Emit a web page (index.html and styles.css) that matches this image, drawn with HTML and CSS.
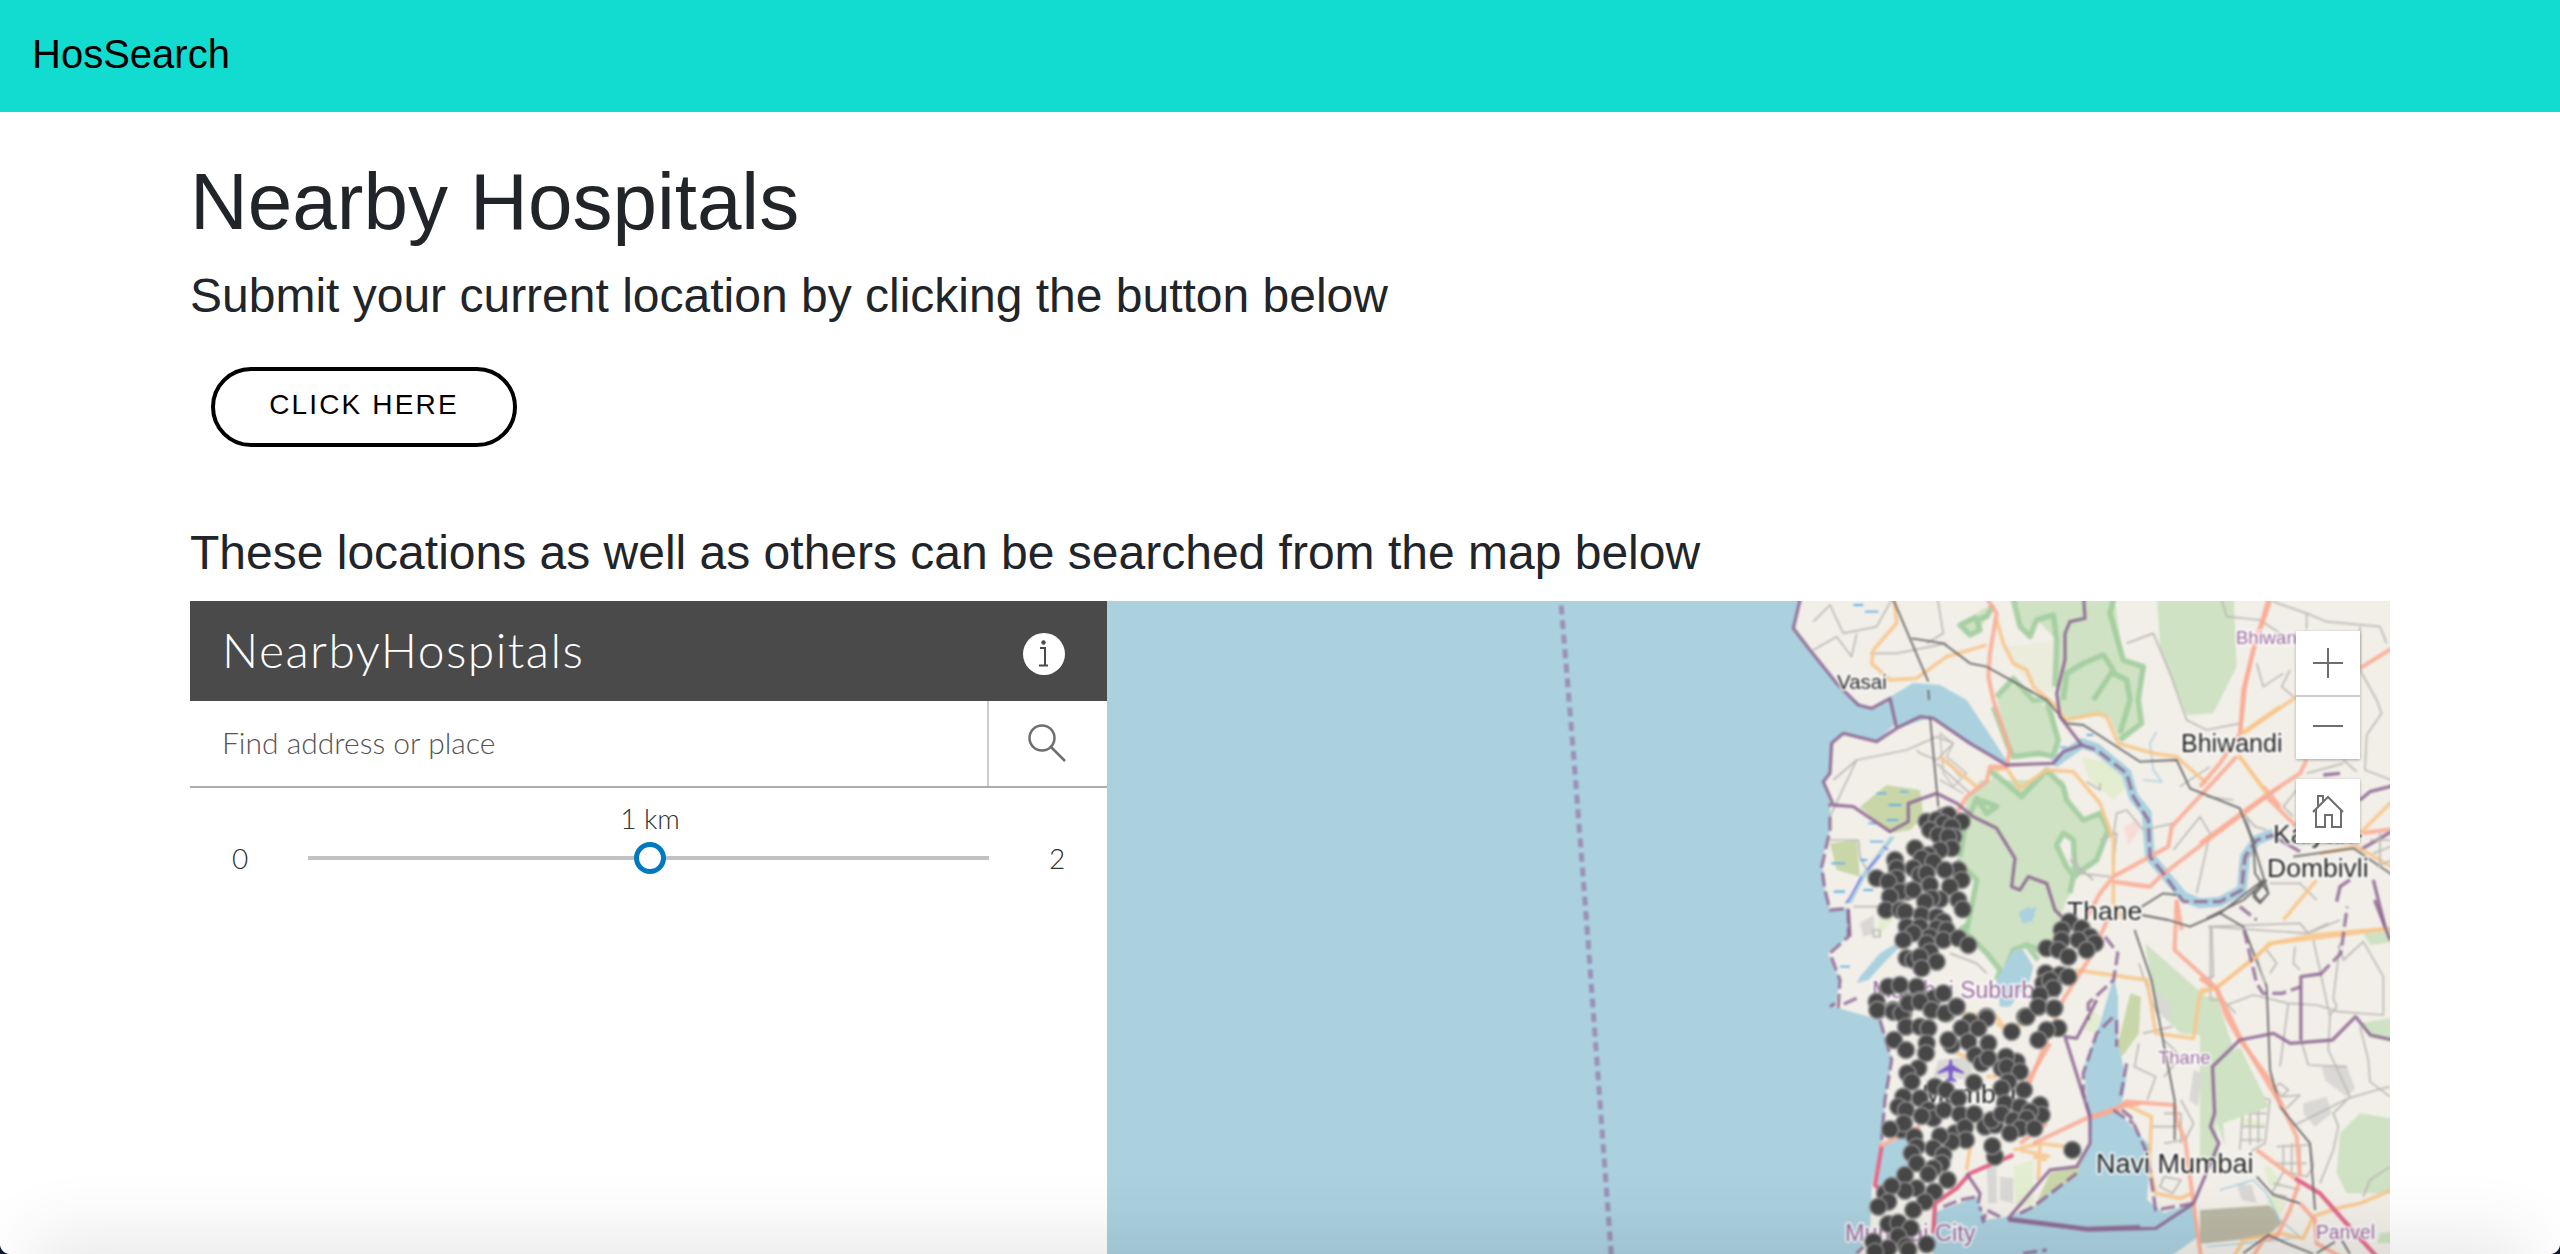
FILE: index.html
```html
<!DOCTYPE html>
<html lang="en">
<head>
<meta charset="utf-8">
<title>HosSearch</title>
<link rel="stylesheet" href="styles.css">
</head>
<body>
<nav class="navbar"><span class="brand">HosSearch</span></nav>
<main class="content">
  <h1 class="title">Nearby Hospitals</h1>
  <h4 class="lead-one">Submit your current location by clicking the button below</h4>
  <button class="cta" type="button">CLICK HERE</button>
  <h4 class="lead-two">These locations as well as others can be searched from the map below</h4>
  <section class="app">
    <aside class="panel">
      <header class="panel-head">
        <span class="panel-title">NearbyHospitals</span>
        <svg class="info" viewBox="0 0 42 42" width="42" height="42"><circle cx="21" cy="21" r="21" fill="#fff"/><circle cx="20.5" cy="9.5" r="2.2" fill="#4a4a4a"/><path d="M17 15h5v17M16 32.500h9" fill="none" stroke="#4a4a4a" stroke-width="2"/></svg>
      </header>
      <div class="search">
        <div class="search-input">Find address or place</div>
        <div class="search-btn"><svg viewBox="0 0 40 40" width="40" height="40"><circle cx="16" cy="15" r="12.500" fill="none" stroke="#6e6e6e" stroke-width="2.500"/><path d="M25 24l14 14" stroke="#6e6e6e" stroke-width="2.500" fill="none"/></svg></div>
      </div>
      <div class="slider">
        <span class="slider-end slider-min">0</span>
        <div class="track"><span class="thumb-label">1 km</span><span class="thumb"></span></div>
        <span class="slider-end slider-max">2</span>
      </div>
    </aside>
    <div class="map">
      <svg class="basemap" viewBox="1097 591 1303 673" width="1303" height="673">
        <rect class="sea" x="1097" y="591" width="1303" height="673"/>
        <path class="dash-sea" d="M1560 591L1574 760L1587 927L1612 1264"/>
        <path class="land" d="M1802 591L1800 601L1793 628L1810 650L1835 682L1852 700L1870 708L1890 698L1913 683L1937 685L1967 703L1987 733L2007 763L1970 745L1933 718L1897 722L1877 742L1843 733L1832 743L1830 773L1823 782L1830 803L1830 830L1822 860L1825 890L1830 910L1848 908L1848 937L1828 953L1840 980L1835 1007L1880 1020L1892 1060L1885 1100L1882 1140L1872 1185L1870 1233L1850 1264L2400 1264L2400 591Z"/>
        <path class="wat" d="M1933 1264L1933 1213L1977 1197L1985 1220L2007 1217L2033 1207L2077 1170L2090 1143L2088 1117L2084 1067L2101 1020L2109 993L2114 977L2118 997L2118 1040L2126 1080L2122 1103L2118 1112L2151 1147L2147 1200L2164 1213L2193 1203L2198 1237L2160 1264Z"/>
        <path class="wat" d="M1882 1146L1895 1141L1920 1125L1908 1170L1885 1187L1874 1186Z"/>
        <g transform="translate(1780 780) scale(.33333)">
          <path class="forest" d="M550 130L600 310L590 420L545 445L620 520L660 570L650 600L680 560L700 510L740 495L800 520L830 470L860 330L890 150L850 0L600 0L560 60Z"/>
          <path class="park" d="M550 130L600 310L590 420L545 445L620 520L660 570L650 600M680 560L700 510L740 495L775 540M740 495L800 520"/>
        </g>
        <g transform="translate(2200 900) scale(.33333)">
          <path class="forest" d="M0 290L50 290L130 540L120 600L45 640L60 800L0 780Z"/>
          <path class="forest" d="M420 700L480 640L600 660L600 880L440 880L410 820Z"/>
          <path class="forest" d="M480 370L600 350L600 425L510 415Z"/>
          <path class="forest" d="M490 100L600 90L600 125L510 135Z"/>
          <path class="pale" d="M190 800L210 798L245 850L210 860Z"/>
          <path class="pale" d="M125 650L195 670L190 685L125 680Z"/>
          <path class="grey" d="M310 610L380 590L395 640L345 680L310 640Z"/>
          <path class="grey" d="M365 500L440 497L465 565L440 590L375 540Z"/>
          <path class="tan" d="M0 930L220 915L245 970L200 1010L20 1030L0 1030Z"/>
          <path class="grey" d="M110 850L155 855L170 910L125 900Z"/>
          <path class="pale" d="M215 885L260 910L240 945L200 910Z"/>
          <path class="forest" d="M540 1000L600 990L600 1030L530 1030Z"/>
          <path class="wline" d="M60 870L160 840L200 880L240 960L300 1010L240 1020L20 1040"/>
          <path class="minor" d="M25 80L300 70L325 100L420 60M340 120L390 350L385 450L450 590L400 640L415 680L400 750L360 850M80 315L160 285L265 310L350 315L415 335L550 345L550 230L490 125L430 180L415 135M300 410L325 495L440 500M390 345L410 320L400 295L420 130M285 675L445 595L530 570L570 560M240 500L265 310M0 240L40 230L35 80L25 80M480 380L505 480L510 545L570 590M490 890L510 840L570 800M200 150L230 190L210 220M285 140L280 190L300 210M240 550L265 570L245 590L225 560ZM250 590L300 585L260 625M120 750L130 600L170 585L210 600L195 730L150 755M130 640H200M125 680H195M150 590V735M175 590V730M120 720H190M230 740L330 735L340 800L320 830L250 815L215 880L260 890M250 735V810M275 730V820M300 735V820M225 790H320M220 850L300 870"/>
          <path class="prim" d="M0 270L50 265L215 130L340 105L600 83M600 860L480 910L410 925L340 950L310 1015L240 1000L130 1020L90 1092"/>
          <path class="trunk" d="M0 235L50 270L80 350L120 420L210 540L290 710L300 830M170 750L285 835M300 840L270 930L230 1010L190 1020L145 1092M300 910L345 960L350 1030L460 1092"/>
          <path class="motor" d="M285 835L360 880L430 960L550 1092"/>
          <path class="rail" d="M60 40L130 80L200 260L210 510L240 620L330 730L345 930M170 830L220 885L300 910M130 1060L205 1005L260 1030L340 1062M350 1060L405 1025M425 1020L450 1062"/>
        </g>
        <g transform="translate(1760 900) scale(.42092 .33333)">
          <path class="forest" d="M915 130L1060 290L1045 405L1000 400L940 330Z"/>
          <path class="forest" d="M1085 480L1140 440L1210 620L1100 670L1105 740L1080 650Z"/>
          <path class="pale" d="M790 330L810 350L795 400L770 390Z"/>
          <path class="olive" d="M880 280L905 290L900 400L860 470L850 430Z"/>
          <path class="grey" d="M945 270L975 320L970 360L940 330Z"/>
          <path class="grey" d="M1030 510L1050 520L1040 620L1020 600Z"/>
          <path class="minor" d="M1065 80L1300 100L1350 70M1070 80V300L1100 300L1130 340M1180 170L1200 250M910 400L980 380M900 430L890 500L940 530L920 600M960 420L1000 470L960 530M1000 600L1030 670L1010 720L960 730M960 640H1000V730M930 680H1000M960 830L1000 840L980 880L950 860ZM900 190L930 300L950 360"/>
          <path class="prim" d="M750 210L920 240L940 400L1030 415L1045 280L1085 262L1180 170L1210 130L1350 110L1497 85M860 610L930 650L925 800L940 880L1000 895L1025 880"/>
          <path class="trunk" d="M990 0L985 150L1085 265L1140 410L1240 620M825 60L790 160L720 300L640 550M780 655L850 630L870 605L985 615L990 660L1010 720L1030 910L1050 1092"/>
          <path class="rail" d="M890 90L930 240L985 600L985 720"/>
          <path class="bd" d="M1030 910L1090 730L1070 680L1080 640L1075 500L1140 420L1220 400L1260 430L1360 420L1415 350L1450 405L1520 425M1285 420L1285 230L1330 222M1030 910L940 985L780 990L590 960M1460 0L1497 120"/>
          <path class="bdd" d="M1030 910L940 930L920 760L880 650L850 620M1150 90L1180 250L1195 280L1240 280L1285 260M1330 225L1380 160L1395 20M1140 20L1180 60M820 110L850 160L840 240L780 310L780 360"/>
        </g>
        <g transform="translate(1780 600) scale(.33333)">
          <path class="forest" d="M700 -30L1000 -30L1030 180L1095 200L1075 300L1085 370L1020 420L985 345L870 360L830 310L830 120L770 60L750 110L720 80Z"/>
          <path class="forest" d="M1130 -30L1360 -30L1370 200L1300 340L1220 345L1140 140Z"/>
          <path class="forest" d="M540 75L590 40L640 10L620 50L600 90L570 105Z"/>
          <path class="forest" d="M650 290L700 235L760 300L820 330L835 420L820 470L780 470L700 470L685 440Z"/>
          <path class="forest" d="M630 510L690 560L720 590L800 510L850 560L860 600L910 660L960 640L985 690L950 780L880 830L870 880L820 990L560 990L590 840L530 780L560 650L600 600L640 560Z"/>
          <path class="soft" d="M770 130L825 120L820 280L760 260L700 200L680 140Z"/>
          <path class="base" d="M850 700L880 720L885 830L860 800L830 735Z"/>
          <path class="pale" d="M905 475L1020 490L1040 560L1000 600L930 540Z"/>
          <path class="blush" d="M1030 680L1070 660L1080 690L1045 735Z"/>
          <path class="olive" d="M240 620L320 555L420 570L430 650L390 690L330 700Z"/>
          <path class="park" d="M640 15L620 50L590 60L600 90L570 105L540 75L590 50M695 -20L720 80L750 110L770 60L820 45L830 120L825 260M1005 -20L990 40L1030 180L1090 200L1075 300L1085 370L1020 420M850 300L860 220L910 190L970 165L1000 210L940 300M1000 220L1040 240L1050 300L1020 400M650 290L700 235L760 300L800 300L835 420L820 470L780 460L700 470L685 440L640 320M630 510L690 560L725 590L800 510L850 560L860 600L910 660L960 640L985 690L950 780L880 830L870 880M850 700L880 720L885 830L860 800L830 735Z"/>
          <path class="park" d="M600 600L650 620L620 640L590 595L545 700L560 650L540 770M530 780L590 840L560 990"/>
          <path class="wat" d="M330 290L400 250L480 255L560 300L620 390L685 490L640 470L560 420L460 350L350 385Z"/>
          <path class="wat" d="M715 940L745 920L765 950L730 970Z"/>
          <path class="river" d="M820 490L905 430L950 445L1040 520L1060 590L1100 640L1110 770L1210 890L1260 910L1320 905L1385 870L1395 770L1430 720L1480 700"/>
          <path class="wline" d="M1130 395L1110 430L1120 510L1145 545L1090 540"/>
          <path class="blue" d="M220 15H250M255 35H295M920 405H940M840 442H860M290 580H320M360 575H385M325 615H365M320 660H355M265 670H290M270 725H310M185 760H215M155 790H190M165 875H195"/>
          <path class="minor" d="M100 65L150 15L190 100L290 80L340 -10M100 150L170 110L215 170L230 100M270 160L350 160L500 130M470 -20L490 100L440 130M1040 130L1120 100L1170 220L1220 360L1280 390L1380 370M1320 -20L1340 50L1440 60L1500 100M160 540L230 480L380 450L470 410L520 430L470 480L420 460L410 450M150 650L230 480M470 490L570 580M1000 710L1010 640L1040 630L1090 690L1180 670M1000 790L1010 700L960 720M880 760L900 820L990 830M870 780L940 840M960 550L960 570L920 545M1250 880L1290 700L1260 650L1180 750M1400 650L1420 750L1380 800L1390 860M1200 560L1290 500M1280 590L1360 600"/>
          <path class="road-fine" d="M480 400L520 430L500 470L560 520L520 560L490 520ZM500 480L540 530M480 540L550 580"/>
          <path class="prim" d="M340 -20L350 70L280 150L275 190L330 240L410 235L500 170L620 135M650 60L670 130L700 190L740 210L760 260L830 320L860 360L950 340L980 350L1015 430L1120 460L1190 470L1280 550M640 510L680 505L720 565L800 510L880 515L960 610L1000 720L1000 830M480 470L590 560M1385 400L1500 320M1375 465L1450 565M1000 840L1000 910L1030 960"/>
          <path class="trunk" d="M610 -20L650 40L640 100L630 160L625 230L640 300L690 450L680 500L630 500L620 545L560 590L530 640M1478 -20L1420 150L1395 260L1380 400M1370 470L1175 680L1165 740L1000 830L960 880L900 990M1500 560L1270 730L1140 830L1110 860L1000 845M1000 845L1100 860M1450 560L1500 620M1190 900L1205 990"/>
          <path class="rail" d="M332 -20L445 245M445 270L447 300M450 350L475 620M395 115L490 130L570 190L620 200L800 300L860 370L910 375L1080 485L1190 480L1230 565L1380 625L1420 730L1465 880L1440 905L1420 880L1450 840M1450 840L1320 940L1230 980L1165 960L1085 945M1085 920L1150 880L1190 885"/>
          <path class="bd" d="M65 -20L40 85L90 150L170 250L235 315L275 325L330 295L350 385M910 -20L915 55L870 65L855 100L855 180L830 280L840 350L905 435L850 455L820 490L680 495L570 430L460 355L420 350L350 385L290 425L190 400L155 430L150 520L130 545L160 615L220 620L330 695L385 665L385 610L470 580L530 610L580 650L650 685L705 775L695 860L720 870L745 830L800 850L825 930L860 965"/>
          <path class="bdd" d="M905 435L950 450L1040 520L1060 590L1105 660L1110 770L1150 820L1210 905L1320 905L1385 870L1395 770L1430 720L1480 705"/>
        </g>
        <g transform="translate(2200 600) scale(.33333)">
          <path class="minor" d="M220 5L320 40L380 65L540 80L560 130M320 40V90M170 190L190 260L250 220M480 80V210L530 300L545 340L500 405L495 510L600 550M270 210L245 260L280 290M320 520L430 490M430 480L470 515M290 570L250 620L280 650M130 640L165 680L200 690M210 850L300 850L350 900"/>
          <path class="bd" d="M215 705L300 755M600 552L510 575L480 600M600 680L480 750M410 905L420 860L450 840M520 840L555 980M370 525L420 520"/>
          <path class="trunk" d="M600 130L480 205M320 480L300 520L200 585L0 730M205 0L160 150L130 270L120 400L60 490L0 560M200 590L290 680M480 700L600 685"/>
          <path class="prim" d="M290 290L130 400M120 470L200 580M350 840L250 960M360 760L470 740L600 815M480 700L600 580"/>
          <path class="rail" d="M120 630L160 720L165 820L205 880L180 910L160 890L200 840M200 840L130 900L20 955M280 770L460 745L600 840"/>
          <path class="minor" d="M510 720H600M520 760L600 730M530 800L600 770M540 700V800"/>
        </g>
        <g transform="translate(1820 1000) scale(.33333)">
          <path class="grey" d="M500 500L530 500L530 610L505 610Z"/>
          <path class="grey" d="M540 530L580 535L580 610L540 600Z"/>
          <path class="pale" d="M580 500L640 480L640 610L590 625Z"/>
          <path class="olive" d="M640 630L690 520L775 500L810 430L790 470L770 530L670 590Z"/>
          <path class="grey" d="M355 180L450 170L460 240L340 230Z"/>
          <path class="prim" d="M430 40L530 50L550 80L620 70M410 160L440 170M500 230H530M580 450L660 430L740 440M660 430L655 540M640 470L680 480M600 450L690 470M530 70L570 100M450 440L440 510"/>
          <path class="trunk" d="M690 130L620 250M680 370L600 430M800 355L900 320L960 310M175 440L300 380M640 430L810 350"/>
          <path class="motor" d="M580 465L450 520L410 565L345 610L340 700M185 440L165 555L175 565"/>
          <path class="bd" d="M810 350L735 110L770 115L810 40L830 0M810 350L810 430L770 500L690 510L565 655L800 685L960 680M440 520L480 580L475 610"/>
          <path class="bdd" d="M810 350L790 280L790 220L830 100L880 50M600 640L640 620L770 520M540 650L500 630L490 665L480 620M370 620L420 600L470 590M880 330L940 370M920 190L900 300M890 60L890 140M180 60L215 180L195 300L185 420M130 740L110 762M610 760L680 750"/>
          <path class="plane" d="M392 178c4 0 5 6 5 16l34 22v6l-32-10-2 20 12 10v5l-17-5-17 5v-5l12-10-2-20-32 10v-6l34-22c0-10 1-16 5-16z"/>
        </g>
        <g transform="translate(1780 780) scale(.33333)">
          <path class="olive" d="M150 190L230 180L240 290L170 270Z"/>
          <path class="pale" d="M300 400L340 420L290 470Z"/>
          <path class="grey" d="M240 430L280 405L285 460L250 470Z"/>
          <path class="wat" d="M330 170L300 210L240 290L210 350L190 370L215 370L250 300L310 220L345 170Z"/>
          <path class="wat" d="M350 490L300 520L240 590L230 610L265 600L320 540L360 500Z"/>
          <path class="wat" d="M720 395L770 380L755 425L725 430Z"/>
          <path class="wat" d="M650 600L700 510L730 510L760 560L750 600L690 680L660 680Z"/>
          <path class="minor" d="M150 180L235 180L240 230L270 290M220 380L320 380M280 450H300V470H280ZM510 520L590 550L620 580"/>
          <path class="vio" d="M200 370L245 290M262 270L300 225M310 200L325 210"/>
          <path class="blue" d="M155 250H195M240 240H262M250 330H280M160 335H195M180 560H210"/>
          <path class="bd" d="M150 80L150 70M205 390L210 470"/>
          <path class="bdd" d="M150 110L150 150L130 240L125 260L135 330L150 390L205 385L205 470L150 520L180 600L175 680L240 650M150 680L165 670"/>
        </g>
        <text class="lbl city" x="1837" y="689" font-size="20.500">Vasai</text>
        <text class="lbl city" x="2181" y="752" font-size="25">Bhiwandi</text>
        <text class="lbl city" x="2067" y="920" font-size="26.500">Thane</text>
        <text class="lbl city" x="2273" y="843" font-size="26.500">Kalyan-</text>
        <text class="lbl city" x="2267" y="877" font-size="26.500">Dombivli</text>
        <text class="lbl city" x="2096" y="1173" font-size="27">Navi Mumbai</text>
        <text class="lbl city" x="1922" y="1103" font-size="26.500">Mumbai</text>
        <text class="lbl area" x="2236" y="644" font-size="18.500">Bhiwandi</text>
        <text class="lbl area" x="2158" y="1064" font-size="18.500">Thane</text>
        <text class="lbl area" x="1872" y="998" font-size="23">Mumbai Suburban</text>
        <text class="lbl area" x="1845" y="1241" font-size="23.500">Mumbai City</text>
        <text class="lbl area" x="2316" y="1239" font-size="19.300">Panvel</text>
        <g class="dots" transform="translate(1780 780) scale(.33333)">
          <circle cx="490" cy="110"/><circle cx="505" cy="105"/><circle cx="545" cy="125"/><circle cx="440" cy="125"/><circle cx="470" cy="120"/><circle cx="490" cy="130"/><circle cx="515" cy="140"/><circle cx="520" cy="170"/><circle cx="450" cy="150"/><circle cx="475" cy="165"/><circle cx="505" cy="170"/><circle cx="515" cy="205"/><circle cx="480" cy="210"/><circle cx="405" cy="205"/><circle cx="445" cy="225"/><circle cx="425" cy="235"/><circle cx="400" cy="265"/><circle cx="460" cy="245"/><circle cx="535" cy="270"/><circle cx="495" cy="270"/><circle cx="420" cy="285"/><circle cx="440" cy="280"/><circle cx="345" cy="240"/><circle cx="350" cy="265"/><circle cx="350" cy="295"/><circle cx="545" cy="300"/><circle cx="510" cy="320"/><circle cx="450" cy="315"/><circle cx="290" cy="295"/><circle cx="325" cy="305"/><circle cx="380" cy="335"/><circle cx="360" cy="335"/><circle cx="400" cy="330"/><circle cx="330" cy="350"/><circle cx="480" cy="358"/><circle cx="455" cy="355"/><circle cx="435" cy="365"/><circle cx="318" cy="390"/><circle cx="360" cy="390"/><circle cx="375" cy="395"/><circle cx="535" cy="360"/><circle cx="548" cy="388"/><circle cx="425" cy="405"/><circle cx="470" cy="410"/><circle cx="490" cy="425"/><circle cx="380" cy="440"/><circle cx="420" cy="440"/><circle cx="470" cy="445"/><circle cx="500" cy="450"/><circle cx="400" cy="460"/><circle cx="450" cy="470"/><circle cx="370" cy="480"/><circle cx="440" cy="490"/><circle cx="490" cy="480"/><circle cx="535" cy="475"/><circle cx="565" cy="495"/><circle cx="450" cy="515"/><circle cx="380" cy="535"/><circle cx="400" cy="540"/><circle cx="420" cy="530"/><circle cx="470" cy="545"/><circle cx="425" cy="565"/>
          <circle cx="868" cy="425"/><circle cx="845" cy="450"/><circle cx="905" cy="445"/><circle cx="930" cy="470"/><circle cx="845" cy="480"/><circle cx="945" cy="490"/><circle cx="895" cy="480"/><circle cx="800" cy="505"/><circle cx="835" cy="510"/><circle cx="920" cy="510"/><circle cx="865" cy="530"/>
          <circle cx="797" cy="580"/><circle cx="840" cy="585"/><circle cx="865" cy="590"/><circle cx="790" cy="610"/><circle cx="810" cy="600"/><circle cx="820" cy="625"/><circle cx="780" cy="645"/><circle cx="775" cy="680"/><circle cx="822" cy="685"/><circle cx="735" cy="710"/>
          <circle cx="325" cy="620"/><circle cx="360" cy="615"/><circle cx="410" cy="620"/><circle cx="290" cy="665"/><circle cx="295" cy="690"/><circle cx="340" cy="690"/><circle cx="370" cy="700"/><circle cx="385" cy="665"/><circle cx="420" cy="660"/><circle cx="460" cy="655"/><circle cx="490" cy="640"/><circle cx="530" cy="680"/><circle cx="455" cy="690"/><circle cx="500" cy="700"/><circle cx="570" cy="725"/><circle cx="620" cy="710"/>
        </g>
        <g class="dots" transform="translate(1820 1000) scale(.33333)">
          <circle cx="172" cy="30"/><circle cx="220" cy="35"/><circle cx="245" cy="40"/><circle cx="265" cy="10"/><circle cx="300" cy="5"/><circle cx="335" cy="30"/><circle cx="375" cy="40"/><circle cx="410" cy="20"/><circle cx="500" cy="55"/><circle cx="620" cy="50"/><circle cx="655" cy="20"/><circle cx="703" cy="25"/><circle cx="575" cy="95"/><circle cx="715" cy="85"/><circle cx="680" cy="90"/><circle cx="655" cy="120"/><circle cx="258" cy="80"/><circle cx="300" cy="80"/><circle cx="325" cy="85"/><circle cx="222" cy="120"/><circle cx="320" cy="130"/><circle cx="258" cy="150"/><circle cx="318" cy="160"/><circle cx="395" cy="135"/><circle cx="385" cy="120"/><circle cx="425" cy="85"/><circle cx="475" cy="85"/><circle cx="445" cy="125"/><circle cx="505" cy="130"/><circle cx="465" cy="165"/><circle cx="485" cy="190"/><circle cx="505" cy="175"/><circle cx="590" cy="185"/><circle cx="558" cy="170"/><circle cx="545" cy="205"/><circle cx="560" cy="200"/><circle cx="600" cy="215"/><circle cx="295" cy="205"/><circle cx="262" cy="220"/><circle cx="275" cy="245"/><circle cx="345" cy="260"/><circle cx="378" cy="270"/><circle cx="462" cy="248"/><circle cx="415" cy="295"/><circle cx="300" cy="295"/><circle cx="250" cy="290"/><circle cx="235" cy="320"/><circle cx="258" cy="330"/><circle cx="565" cy="245"/><circle cx="545" cy="265"/><circle cx="612" cy="270"/><circle cx="555" cy="310"/><circle cx="600" cy="320"/><circle cx="660" cy="315"/><circle cx="665" cy="345"/><circle cx="630" cy="335"/><circle cx="325" cy="330"/><circle cx="340" cy="355"/><circle cx="305" cy="348"/><circle cx="372" cy="330"/><circle cx="420" cy="343"/><circle cx="463" cy="342"/><circle cx="495" cy="380"/><circle cx="525" cy="375"/><circle cx="515" cy="360"/><circle cx="545" cy="342"/><circle cx="580" cy="360"/><circle cx="620" cy="355"/><circle cx="600" cy="385"/><circle cx="643" cy="385"/><circle cx="570" cy="400"/><circle cx="245" cy="390"/><circle cx="252" cy="370"/><circle cx="210" cy="388"/><circle cx="405" cy="400"/><circle cx="435" cy="382"/><circle cx="438" cy="420"/><circle cx="283" cy="410"/><circle cx="395" cy="425"/><circle cx="360" cy="408"/><circle cx="340" cy="445"/><circle cx="290" cy="440"/><circle cx="370" cy="465"/><circle cx="275" cy="460"/><circle cx="365" cy="490"/><circle cx="290" cy="490"/><circle cx="525" cy="470"/><circle cx="517" cy="438"/><circle cx="757" cy="450"/><circle cx="340" cy="505"/><circle cx="325" cy="522"/><circle cx="383" cy="540"/><circle cx="255" cy="525"/><circle cx="290" cy="565"/><circle cx="343" cy="575"/><circle cx="255" cy="572"/><circle cx="315" cy="605"/><circle cx="195" cy="580"/><circle cx="215" cy="558"/><circle cx="205" cy="605"/><circle cx="175" cy="620"/><circle cx="280" cy="630"/><circle cx="205" cy="672"/><circle cx="235" cy="668"/><circle cx="272" cy="685"/><circle cx="235" cy="708"/><circle cx="320" cy="733"/><circle cx="160" cy="725"/><circle cx="258" cy="738"/><circle cx="205" cy="745"/><circle cx="165" cy="755"/><circle cx="265" cy="750"/>
        </g>
      </svg>
      <div class="zoom-box">
        <button class="tool tool-plus" type="button"><svg viewBox="0 0 30 30" width="30" height="30"><path d="M15 0v30M0 15h30" stroke="#6e6e6e" stroke-width="2" fill="none"/></svg></button>
        <button class="tool tool-minus" type="button"><svg viewBox="0 0 30 30" width="30" height="30"><path d="M0 15h30" stroke="#6e6e6e" stroke-width="2" fill="none"/></svg></button>
      </div>
      <button class="tool tool-home" type="button"><svg viewBox="0 0 32 34" width="32" height="34"><path d="M1 17L16 2L31 17M4 14V32H13V20H20V32H29V14M6 12V1H11V6" fill="none" stroke="#6e6e6e" stroke-width="2"/></svg></button>
    </div>
  </section>
</main>
<div class="window-shade"></div>
<div class="corner corner-left"></div>
<div class="corner corner-right"></div>
</body>
</html>
```
FILE: styles.css
```css
* { box-sizing: border-box; }
html, body { margin: 0; height: 100%; overflow: hidden; background: #fff; }
body { font-family: "Liberation Sans", Arial, sans-serif; color: #212529; }

.navbar { height: 112px; background: #11dccf; display: flex; align-items: center; padding: 0 32px 4px; }
.brand { font-size: 40px; color: #000; }

.content { margin-left: 190px; width: 2200px; }
.title { margin: 0; padding-top: 42px; font-size: 80px; line-height: 96px; font-weight: 400; }
.lead-one { margin: 0; padding-top: 17px; font-size: 48px; line-height: 58px; font-weight: 400; }
.cta { display: block; margin: 42px 0 0 21px; width: 306px; height: 80px; border: 4px solid #000; border-radius: 40px; background: #fff; font-family: inherit; font-size: 28px; letter-spacing: 2.150px; color: #000; padding: 0 0 5px; }
.lead-two { margin: 0; padding-top: 77px; font-size: 48px; line-height: 58px; font-weight: 400; }

.app { display: flex; margin-top: 19px; height: 653px; }
.panel { width: 917px; flex: none; background: #fff; font-family: Lato, sans-serif; }
.panel-head { height: 100px; background: #4a4a4a; display: flex; align-items: center; justify-content: space-between; padding: 0 42px 0 32px; }
.panel-title { color: #fff; font-size: 48px; font-weight: 300; letter-spacing: 1.450px; margin-top: -3px; }
.info { margin-top: 6px; }
.search { display: flex; height: 87px; border-bottom: 2px solid #adadad; }
.search-input { flex: 1; padding: 16px 0 0 32px; font-size: 30px; line-height: 50px; font-weight: 300; color: #555; }
.search-btn { width: 120px; flex: none; border-left: 2px solid #ccc; display: flex; padding: 22px 0 0 37px; }
.slider { display: flex; align-items: center; height: 140px; }
.slider-end { width: 118px; flex: none; text-align: center; font-size: 28px; font-weight: 300; color: #323232; }
.slider-min { padding-right: 18px; }
.slider-max { padding-left: 18px; }
.track { width: 681px; height: 4px; background: #c2c2c2; position: relative; }
.thumb { position: absolute; left: 326px; top: -14px; width: 32px; height: 32px; border-radius: 50%; border: 5px solid #0079c1; background: #fff; }
.thumb-label { position: absolute; left: 242px; width: 200px; top: -55px; text-align: center; font-size: 28px; line-height: 34px; font-weight: 300; color: #323232; }

.map { flex: 1; position: relative; overflow: hidden; background: #abd1df; }
.basemap { display: block; margin: -10px 0 0 -10px; filter: blur(.8px); }
.sea { fill: #abd1df; }
.land { fill: #f2efe9; }
.base { fill: #f2efe9; }
.soft { fill: #ebecdc; }
.blush { fill: #f8dcd8; }
.wat { fill: #abd1df; }
.forest { fill: #cfe2c3; }
.pale { fill: #e3edcf; }
.olive { fill: #c9d6a8; }
.grey { fill: #d9d8d5; }
.tan { fill: #bab8a5; }
.plane { fill: #7b5fc9; }
path { vector-effect: non-scaling-stroke; }
.park, .river, .wline, .blue, .minor, .road-fine, .prim, .trunk, .motor, .rail, .bd, .bdd, .vio, .dash-sea { fill: none; stroke-linejoin: round; }
.dash-sea { stroke: #9b90b4; stroke-width: 5; stroke-dasharray: 9 5.600; }
.park { stroke: #9ccb9a; stroke-width: 5.500; opacity: .8; }
.river { stroke: #abd1df; stroke-width: 10; }
.wline { stroke: #abd1df; stroke-width: 1.500; }
.blue { stroke: #62b0ea; stroke-width: 1.800; }
.vio { stroke: #7a6fe0; stroke-width: 1.500; }
.minor { stroke: #bcbab5; stroke-width: 1.700; }
.road-fine { stroke: #c2c0bb; stroke-width: 1.500; }
.prim { stroke: #f9c68a; stroke-width: 3.800; opacity: .85; }
.trunk { stroke: #fbab94; stroke-width: 4.200; opacity: .85; }
.motor { stroke: #e4698a; stroke-width: 4.200; }
.rail { stroke: #6a6a6a; stroke-width: 1.800; }
.bd { stroke: #8c6591; stroke-width: 3.300; opacity: .85; }
.bdd { stroke: #8c6591; stroke-width: 3.300; stroke-dasharray: 14 5; opacity: .8; }
.lbl { font-family: "Liberation Sans", Arial, sans-serif; paint-order: stroke; stroke: rgba(255,255,255,.85); stroke-width: 3.500px; stroke-linejoin: round; }
.city { fill: #1f1f1f; }
.area { fill: #99699b; }
.dots circle { r: 25.500px; fill: #474747; stroke: rgba(140,140,140,.85); stroke-width: 2px; vector-effect: non-scaling-stroke; }

.tool { display: flex; align-items: center; justify-content: center; width: 64px; background: #fff; border: 0; padding: 0; }
.zoom-box { position: absolute; top: 30px; left: 1189px; width: 64px; box-shadow: 0 1px 3px rgba(0,0,0,.3); }
.tool-plus { height: 66px; border-bottom: 2px solid #ccc; }
.tool-minus { height: 62px; padding-bottom: 4px; }
.tool-home { position: absolute; top: 178px; left: 1189px; height: 64px; padding-top: 2px; box-shadow: 0 1px 3px rgba(0,0,0,.3); }

.window-shade { position: fixed; left: 60px; right: 60px; bottom: -40px; height: 30px; box-shadow: 0 0 70px 30px rgba(0,0,0,.09); pointer-events: none; }
.corner { position: fixed; bottom: 0; width: 10px; height: 10px; pointer-events: none; }
.corner-left { left: 0; background: radial-gradient(circle at 100% 0, transparent 9.500px, #101a2c 10.500px); }
.corner-right { right: 0; background: radial-gradient(circle at 0 0, transparent 9.500px, #101a2c 10.500px); }
```
